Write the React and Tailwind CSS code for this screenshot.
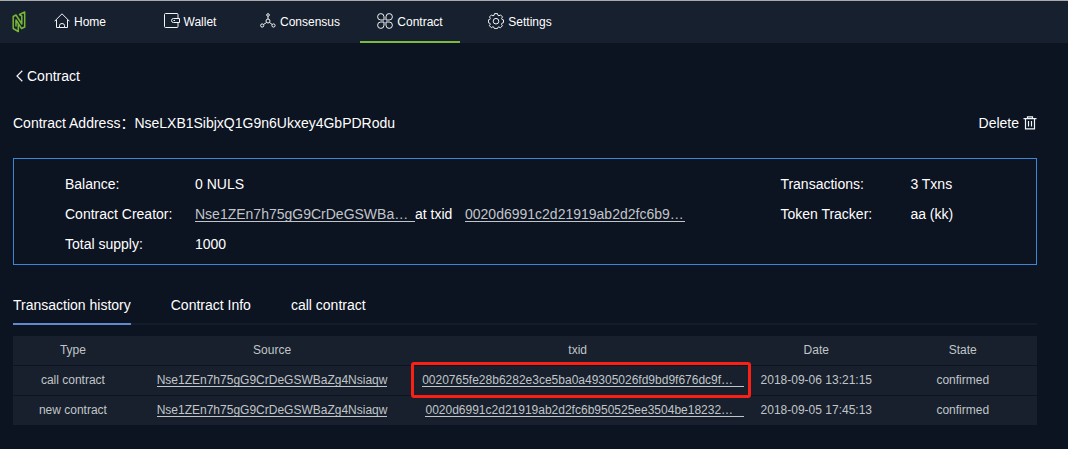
import React from "react";

function Logo() {
  return (
    <svg width="14" height="22" viewBox="0 0 14 22" fill="none" stroke="#78b832" strokeWidth="1.500" strokeLinejoin="round" aria-hidden="true">
      <path d="M4 15.500V9L9.500 17.500L12.700 16V1L7.500 3.500L9.800 5V13L4 4L1.200 5.500V17.500L6.300 20.500V13" />
    </svg>
  );
}

const iconProps = {
  width: 16,
  height: 16,
  viewBox: "0 0 16 16",
  fill: "none",
  stroke: "#f2f5f7",
  strokeWidth: 1,
  "aria-hidden": true,
};

function HomeIcon() {
  return (
    <svg {...iconProps}>
      <path d="M0.500 8.300L8 0.800l7.500 7.500M2.500 6.800v7.700h3v-2a2.500 2 0 0 1 5 0v2h3V6.800M5.500 14.500h5" />
    </svg>
  );
}

function WalletIcon() {
  return (
    <svg {...iconProps}>
      <path d="M14 5V1.500Q14 0.500 13 0.500H1.500Q0.500 0.500 0.500 1.500V13.500Q0.500 14.500 1.500 14.500H13Q14 14.500 14 13.500V10M15.500 5.500H9.500a2 2 0 0 0 0 4H15.500z" />
      <path d="M9.500 7.500h1.500" />
    </svg>
  );
}

function ConsensusIcon() {
  return (
    <svg {...iconProps}>
      <circle cx="8" cy="2" r="1.300" />
      <circle cx="8" cy="8" r="2" />
      <circle cx="2.200" cy="12.500" r="1.600" />
      <circle cx="13.500" cy="12.500" r="1.600" />
      <path d="M8 3.500V6M6.500 9.500l-3 2M9.500 9.500l2.700 2" />
    </svg>
  );
}

function ContractIcon() {
  return (
    <svg {...iconProps}>
      <path d="M7 7H3.800A3.200 3.200 0 1 1 7 3.800zM9 7V3.800A3.200 3.200 0 1 1 12.200 7zM7 9v3.200A3.200 3.200 0 1 1 3.800 9zM9 9h3.200A3.200 3.200 0 1 1 9 12.200z" />
    </svg>
  );
}

function SettingsIcon() {
  return (
    <svg {...iconProps}>
      <path d="M6.500 0.600h3l.4 1.700 1.100.5 1.500-.9 2 2-.9 1.600.4 1 1.500.4v2.800l-1.600.5-.4 1.100.9 1.500-2 2-1.500-.9-1.100.5-.4 1.200h-3l-.4-1.300-1.200-.5-1.400.9-2-2 .9-1.500-.5-1-1.400-.5V6.900l1.400-.4.5-1.100-.8-1.500 2-2 1.400.9 1.200-.5z" />
      <circle cx="8" cy="8.200" r="2.800" />
    </svg>
  );
}

function TrashIcon() {
  return (
    <svg width="14" height="14" viewBox="0 0 14 14" fill="none" stroke="#f2f5f7" strokeWidth="1.200" aria-hidden="true">
      <path d="M0.500 2.600h13M4.500 2.300V0.800h5v1.500M2.500 3v9.900h9V3M5.500 5v5.500M8.500 5v5.500" />
    </svg>
  );
}

const navItems = [
  { label: "Home", Icon: HomeIcon },
  { label: "Wallet", Icon: WalletIcon },
  { label: "Consensus", Icon: ConsensusIcon },
  { label: "Contract", Icon: ContractIcon, active: true },
  { label: "Settings", Icon: SettingsIcon },
];

const rows = [
  {
    type: "call contract",
    source: "Nse1ZEn7h75gG9CrDeGSWBaZg4Nsiaqw",
    txid: "0020765fe28b6282e3ce5ba0a49305026fd9bd9f676dc9f…",
    date: "2018-09-06 13:21:15",
    state: "confirmed",
    marked: true,
  },
  {
    type: "new contract",
    source: "Nse1ZEn7h75gG9CrDeGSWBaZg4Nsiaqw",
    txid: "0020d6991c2d21919ab2d2fc6b950525ee3504be18232…",
    date: "2018-09-05 17:45:13",
    state: "confirmed",
  },
];

function Field({ label, children }) {
  return (
    <div className="flex h-[30px] items-center">
      <dt className="w-[130px] shrink-0">{label}</dt>
      <dd className="flex items-center whitespace-nowrap">{children}</dd>
    </div>
  );
}

function HashLink({ children }) {
  return (
    <a href="#hash" className="block w-[220px] border-b border-[#c1c5c9] leading-[14px] text-[#c1c5c9]">
      {children}
    </a>
  );
}

export default function App() {
  return (
    <div className="min-h-screen bg-[#0c1321] font-['Liberation_Sans','Noto_Sans_CJK_SC',sans-serif] text-sm text-white">
      <header className="flex h-[43px] items-stretch border-t border-[#a9abae] bg-[#17202e]">
        <a href="#top" aria-label="NULS" className="flex w-[30px] items-center pl-3">
          <Logo />
        </a>
        <nav className="flex gap-[10px] text-xs">
          {navItems.map(({ label, Icon, active }) => (
            <a
              key={label}
              href={"#" + label.toLowerCase()}
              className={
                active
                  ? "flex w-[100px] items-center justify-center gap-1 border-b-2 border-[#7db93b]"
                  : "flex w-[100px] items-center justify-center gap-1 border-b-2 border-transparent"
              }
            >
              <Icon />
              <span className="pt-[2px]">{label}</span>
            </a>
          ))}
        </nav>
      </header>

      <main className="pt-[23px] pr-[31px] pl-[13px]">
        <a href="#contract" className="flex h-5 w-fit items-center gap-1 pl-[3px]">
          <svg width="7" height="12" viewBox="0 0 7 12" fill="none" stroke="#f2f5f7" strokeWidth="1.200" aria-hidden="true">
            <path d="M6.300 0.800L1 6l5.300 5.200" />
          </svg>
          <h1>Contract</h1>
        </a>

        <div className="mt-[27px] flex h-5 items-center justify-between">
          <p>Contract Address：NseLXB1SibjxQ1G9n6Ukxey4GbPDRodu</p>
          <button type="button" className="flex items-center gap-1">
            Delete
            <TrashIcon />
          </button>
        </div>

        <dl className="mt-[25px] flex border border-[#3b86d6] pt-[10px] pb-[5px]">
          <div className="w-[70%] pl-[51px]">
            <Field label="Balance:">0 NULS</Field>
            <Field label="Contract Creator:">
              <HashLink>Nse1ZEn7h75gG9CrDeGSWBa…</HashLink>
              <span className="w-[50px]">at txid</span>
              <HashLink>0020d6991c2d21919ab2d2fc6b9…</HashLink>
            </Field>
            <Field label="Total supply:">1000</Field>
          </div>
          <div className="w-[30%] pl-[51px]">
            <Field label="Transactions:">3 Txns</Field>
            <Field label="Token Tracker:">aa (kk)</Field>
          </div>
        </dl>

        <div role="tablist" className="mt-5 flex h-10 gap-10 border-b-2 border-[#141c29]">
          <button type="button" role="tab" aria-selected="true" className="-mb-[2px] border-b-2 border-[#608bca] pt-[2px]">
            Transaction history
          </button>
          <button type="button" role="tab" aria-selected="false" className="pt-[2px]">Contract Info</button>
          <button type="button" role="tab" aria-selected="false" className="pt-[2px]">call contract</button>
        </div>

        <table className="mt-[11px] w-full table-fixed border-separate border-spacing-0 text-center text-xs text-[#c1c5c9] [&_td]:border-b [&_td]:border-[#0c1321] [&_td]:px-0 [&_td]:pt-0 [&_td]:pb-[2px] [&_th]:border-b [&_th]:border-[#0c1321] [&_th]:px-0 [&_th]:pt-0 [&_th]:pb-[2px]">
          <colgroup>
            <col className="w-[11.7%]" />
            <col className="w-[27.2%]" />
            <col className="w-[32.5%]" />
            <col className="w-[14.1%]" />
            <col className="w-[14.5%]" />
          </colgroup>
          <thead>
            <tr className="h-[30px] bg-[#17202c]">
              <th className="font-normal">Type</th>
              <th className="font-normal">Source</th>
              <th className="font-normal">txid</th>
              <th className="font-normal">Date</th>
              <th className="font-normal">State</th>
            </tr>
          </thead>
          <tbody>
            {rows.map((row) => (
              <tr key={row.txid} className="h-[30px] bg-[#17202c]">
                <td>{row.type}</td>
                <td>
                  <a href="#source" className="inline-block border-b border-[#c1c5c9] pt-px align-middle leading-[12px]">
                    {row.source}
                  </a>
                </td>
                <td className="relative text-right">
                  <a href="#txid" className="inline-block border-b border-[#c1c5c9] pt-px pr-[11px] align-middle leading-[12px] whitespace-nowrap">
                    {row.txid}
                  </a>
                  {row.marked && (
                    <span className="pointer-events-none absolute -top-1 -right-[7px] -bottom-[3px] left-0 rounded-[3px] border-3 border-[#fb2016]" />
                  )}
                </td>
                <td>{row.date}</td>
                <td>{row.state}</td>
              </tr>
            ))}
          </tbody>
        </table>
      </main>
    </div>
  );
}
